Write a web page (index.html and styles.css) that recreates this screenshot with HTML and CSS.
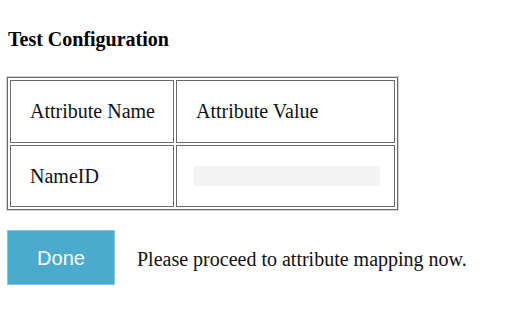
FILE: index.html
```html
<!DOCTYPE html>
<html>
<head>
<meta charset="utf-8">
<link rel="stylesheet" href="styles.css">
</head>
<body>
<div class="page">
  <h4 class="title">Test Configuration</h4>
  <table class="attrs">
    <colgroup>
      <col class="col-name">
      <col class="col-value">
    </colgroup>
    <tr class="row-head">
      <td class="name">Attribute Name</td>
      <td class="value">Attribute Value</td>
    </tr>
    <tr class="row-data">
      <td class="name">NameID</td>
      <td class="value"><div class="placeholder"></div></td>
    </tr>
  </table>
  <div class="actions">
    <button class="done">Done</button>
    <span class="message">Please proceed to attribute mapping now.</span>
  </div>
</div>
</body>
</html>
```
FILE: styles.css
```css
html, body {
  margin: 0;
  padding: 0;
  background: #ffffff;
}

.page {
  padding: 28px 0 0 7px;
  font-family: "Liberation Serif", "Times New Roman", serif;
  font-size: 20px;
  color: #111111;
}

.title {
  margin: 0 0 26px 1px;
  font-size: 20px;
  font-weight: bold;
  line-height: 23px;
  color: #000000;
}

.attrs {
  width: 391px;
  table-layout: fixed;
  border-collapse: separate;
  border-spacing: 2px;
  border: 1px solid #6a6a6a;
  box-shadow: 0 0 0 1px #d4d4d4;
}

.col-name {
  width: 164px;
}

.col-value {
  width: 219px;
}

.attrs td {
  box-sizing: border-box;
  border: 1px solid #6a6a6a;
  vertical-align: middle;
  white-space: nowrap;
  line-height: 23px;
}

.row-head td {
  height: 63px;
}

.row-data td {
  height: 62px;
}

.attrs td.name {
  padding: 0 0 0 19px;
}

.attrs td.value {
  padding: 0 0 0 19px;
}

.row-data td.value {
  padding-left: 17px;
}

.placeholder {
  width: 186px;
  height: 20px;
  background: #f4f4f4;
}

.actions {
  display: flex;
  align-items: center;
  margin-top: 20px;
}

.done {
  box-sizing: border-box;
  width: 108px;
  height: 55px;
  margin: 0;
  padding: 2px 0 0;
  background: #4babcf;
  border: 1px solid #86c7e0;
  color: #ffffff;
  font-family: "Liberation Sans", Arial, sans-serif;
  font-size: 20px;
}

.message {
  margin-left: 22px;
  line-height: 23px;
  padding-top: 3px;
}
```
